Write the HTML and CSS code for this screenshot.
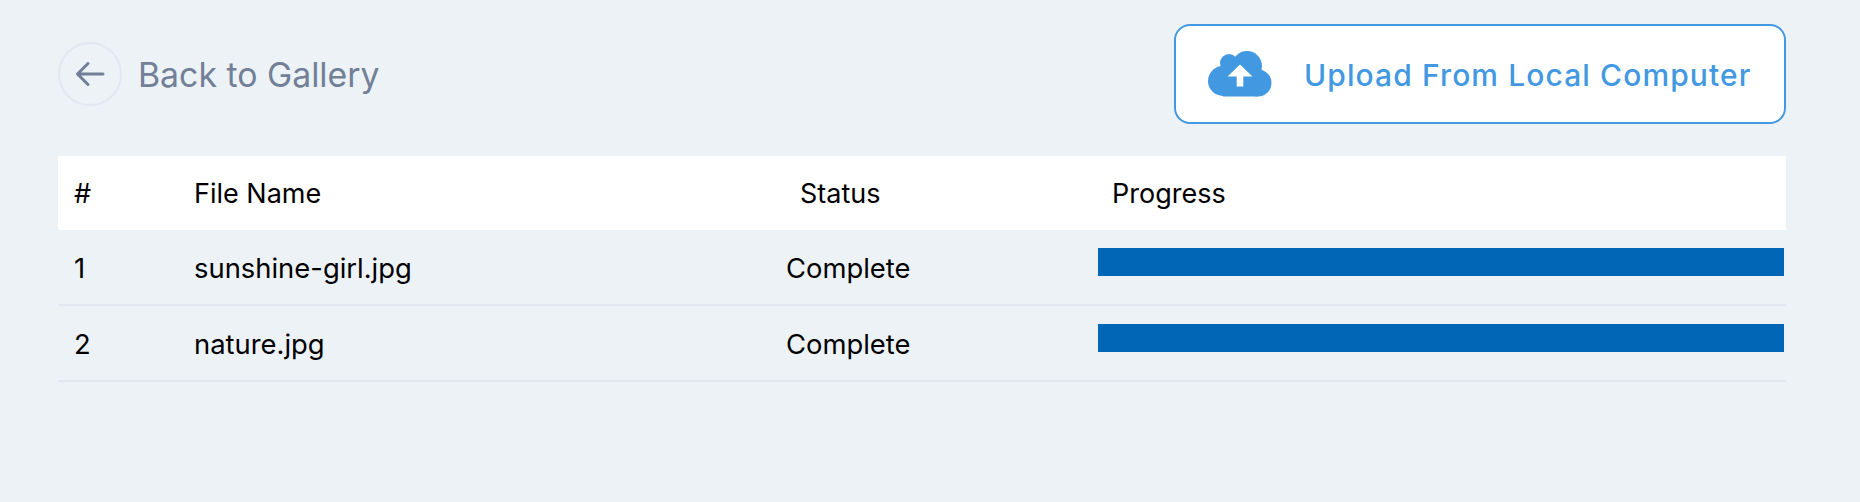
FILE: index.html
```html
<!DOCTYPE html>
<html lang="en">
<head>
  <meta charset="UTF-8">
  <title>Upload</title>
  <link rel="stylesheet" href="styles.css">
</head>
<body>

  <div class="top-bar">
    <a class="back-link" href="#">
      <span class="back-circle">
        <svg width="30" height="26" viewBox="0 0 30 26" fill="none" stroke="#718096" stroke-width="3" stroke-linecap="round" stroke-linejoin="round">
          <path d="M28 13H3M13 2.500L2.500 13L13 23.500"/>
        </svg>
      </span>
      Back to Gallery
    </a>
    <button class="upload-btn" type="button">
      <svg width="64" height="46" viewBox="0 0 64 46">
        <g fill="#4299e1">
          <circle cx="15" cy="30" r="15"/>
          <circle cx="21" cy="12" r="9"/>
          <circle cx="39" cy="15" r="15"/>
          <circle cx="50" cy="32" r="13.500"/>
          <rect x="15" y="20" width="35" height="25.500"/>
        </g>
        <path fill="#fff" d="M32 13.500L44.500 25.500H35.300V35.500H28.700V25.500H19.500Z"/>
      </svg>
      <span class="upload-label">Upload From Local Computer</span>
    </button>
  </div>

  <table class="file-table">
    <thead>
      <tr>
        <th class="col-num">#</th>
        <th class="col-name">File Name</th>
        <th class="col-status">Status</th>
        <th class="col-progress">Progress</th>
      </tr>
    </thead>
    <tbody>
      <tr>
        <td>1</td>
        <td>sunshine-girl.jpg</td>
        <td class="status">Complete</td>
        <td class="progress"><div class="bar"></div></td>
      </tr>
      <tr>
        <td>2</td>
        <td>nature.jpg</td>
        <td class="status">Complete</td>
        <td class="progress"><div class="bar"></div></td>
      </tr>
    </tbody>
  </table>

</body>
</html>
```

FILE: styles.css
```css
body {
  font-family: Inter, sans-serif;
  background-color: #edf2f7;
  margin: 0;
  padding: 24px 74px 0 58px;
}

.top-bar {
  display: flex;
  justify-content: space-between;
  align-items: center;
  height: 100px;
}

.back-link {
  display: flex;
  align-items: center;
  gap: 16px;
  color: #718096;
  font-size: 33.800px;
  text-decoration: none;
}

.back-circle {
  display: flex;
  align-items: center;
  justify-content: center;
  box-sizing: border-box;
  width: 64px;
  height: 64px;
  border: 2px solid #e2e8f0;
  border-radius: 50%;
}

.upload-btn {
  display: flex;
  align-items: center;
  gap: 32px;
  box-sizing: border-box;
  width: 612px;
  height: 100px;
  padding: 0 32px;
  background-color: #fff;
  border: 2px solid #4299e1;
  border-radius: 16px;
  color: #4299e1;
  font-family: inherit;
  font-size: 30px;
  font-weight: 500;
  letter-spacing: 1.100px;
}

.upload-label {
  margin-top: 2px;
}

.file-table {
  width: 100%;
  margin-top: 32px;
  border-collapse: separate;
  border-spacing: 0;
  table-layout: fixed;
  color: #000;
  font-size: 27.400px;
}

.file-table th {
  box-sizing: border-box;
  height: 74px;
  padding: 0 0 0 16px;
  background-color: #fff;
  font-size: 27px;
  font-weight: 400;
  text-align: left;
}

.file-table td {
  box-sizing: border-box;
  height: 76px;
  padding: 2px 0 0 16px;
  border-bottom: 2px solid #e2e8f0;
}

.col-num {
  width: 120px;
}

.col-name {
  width: 592px;
}

.col-status {
  width: 328px;
}

.file-table .col-status {
  padding-left: 30px;
}

.file-table .col-progress {
  padding-left: 14px;
}

.file-table .progress {
  padding: 18px 2px 28px 0;
  vertical-align: top;
}

.bar {
  height: 28px;
  background-color: #0066b5;
}
```
